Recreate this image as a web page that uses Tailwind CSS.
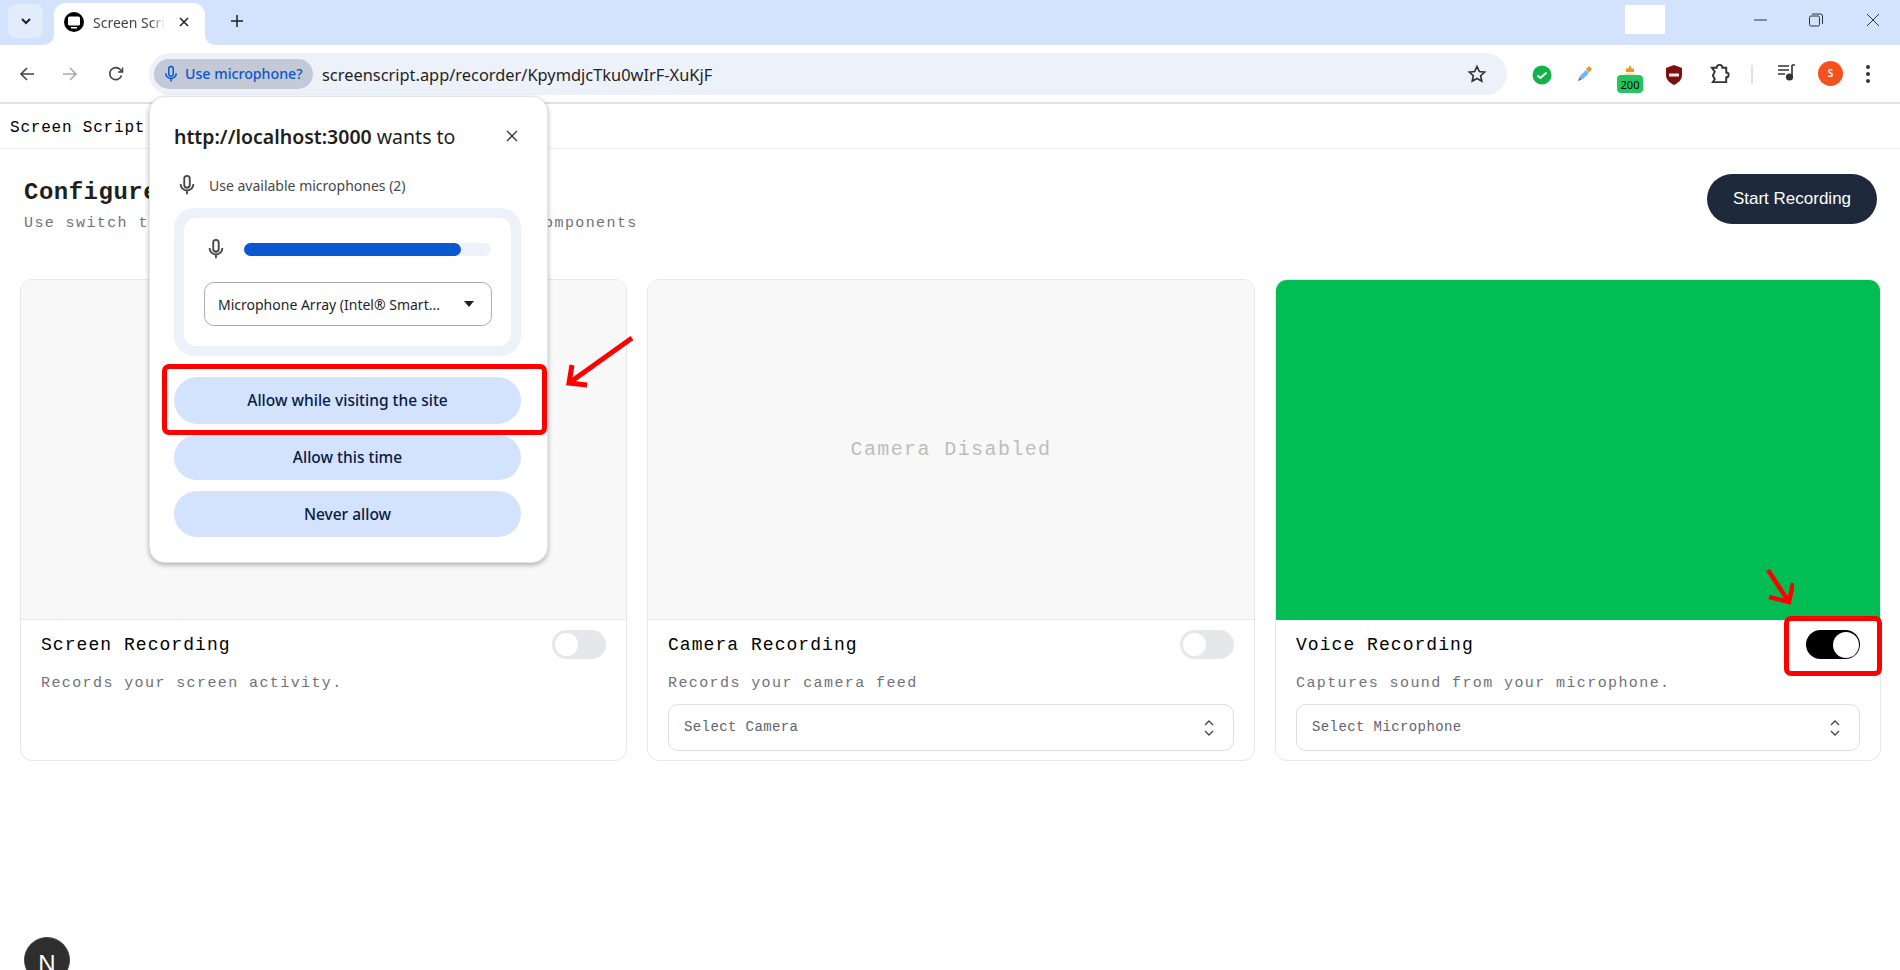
<!DOCTYPE html>
<html lang="en">
<head>
  <meta charset="UTF-8" />
  <title>Screen Script</title>
  <script src="https://cdn.jsdelivr.net/npm/@tailwindcss/browser@4"></script>
</head>
<body class="relative h-[970px] w-[1900px] overflow-hidden bg-white font-['Noto_Sans',sans-serif]">

  <!-- Tab strip -->
  <div class="relative flex h-[45px] items-start bg-[#d3e3fd]">
    <div class="ml-2 mt-1 flex h-[34px] w-[35px] items-center justify-center rounded-lg bg-[#e3ecfc]">
      <svg class="h-4 w-4" viewBox="0 0 16 16" fill="none" stroke="#1f1f1f" stroke-width="2"><path d="M4 6l4 4 4-4" /></svg>
    </div>
    <div class="relative ml-[11px] mt-[3px] flex h-[42px] w-[151px] items-center rounded-t-xl bg-white pb-1 pl-[10px]">
      <svg class="h-5 w-5" viewBox="0 0 20 20"><circle cx="10" cy="10" r="10" fill="#000" /><rect x="4" y="4.5" width="12" height="9" rx="1.5" fill="#fff" /><rect x="7" y="15" width="6" height="1.5" fill="#fff" /></svg>
      <span class="ml-[9px] w-[72px] overflow-hidden whitespace-nowrap text-[14px] text-[#444] [mask-image:linear-gradient(90deg,#000_80%,transparent)]">Screen Script</span>
      <svg class="ml-[13px] h-3 w-3" viewBox="0 0 12 12" stroke="#1f1f1f" stroke-width="1.5"><path d="M2 2l8 8M10 2l-8 8" /></svg>
      <svg class="absolute bottom-0 right-[-10px] h-[10px] w-[10px]" viewBox="0 0 10 10"><path d="M0 0a10 10 0 0 0 10 10H0z" fill="#fff" /></svg>
      <svg class="absolute bottom-0 left-[-10px] h-[10px] w-[10px]" viewBox="0 0 10 10"><path d="M10 0a10 10 0 0 1-10 10h10z" fill="#fff" /></svg>
    </div>
    <svg class="ml-[25px] mt-[14px] h-[14px] w-[14px]" viewBox="0 0 14 14" stroke="#1f1f1f" stroke-width="1.5"><path d="M7 1v12M1 7h12" /></svg>
    <div class="absolute left-[1625px] top-[5px] h-[29px] w-[40px] bg-white"></div>
    <svg class="absolute left-[1754px] top-[14px] h-3 w-[14px]" viewBox="0 0 14 12" stroke="#333" stroke-width="1"><path d="M0 6h13" /></svg>
    <svg class="absolute left-[1809px] top-[13px] h-[14px] w-[14px]" viewBox="0 0 14 14" fill="none" stroke="#333" stroke-width="1"><rect x="0.5" y="3" width="10" height="10" rx="1.5" /><path d="M3 1h8.5a2 2 0 0 1 2 2v8" /></svg>
    <svg class="absolute left-[1866px] top-[13px] h-[14px] w-[14px]" viewBox="0 0 14 14" stroke="#333" stroke-width="1"><path d="M1 1l12 12M13 1L1 13" /></svg>
  </div>

  <!-- Toolbar -->
  <div class="flex h-[59px] items-center rounded-t-[10px] border-b-2 border-[#e2e2e2] bg-white pt-[1px]">
    <svg class="ml-[19px] h-4 w-4" viewBox="0 0 16 16" fill="none" stroke="#444" stroke-width="1.6"><path d="M15 8H2M8 2L2 8l6 6" /></svg>
    <svg class="ml-[27px] h-4 w-4" viewBox="0 0 16 16" fill="none" stroke="#aaa" stroke-width="1.6"><path d="M1 8h13M8 2l6 6-6 6" /></svg>
    <svg class="ml-[30px] h-4 w-4" viewBox="0 0 16 16" fill="none" stroke="#444" stroke-width="1.6"><path d="M13.5 9.5A6 6 0 1 1 12.4 3.8L14.5 6M14.5 1.5V6H10" /></svg>
    <div class="ml-[25px] flex h-[42px] w-[1358px] items-center rounded-full bg-[#edf2fa] pl-[5px] pr-[20px]">
      <div class="flex h-[30px] w-[159px] items-center rounded-full bg-[#c3c9d6] pl-[8px]">
        <svg class="h-[18px] w-[18px]" viewBox="0 0 24 24" fill="none" stroke="#0b57d0" stroke-width="2"><rect x="9" y="2" width="6" height="13" rx="3" /><path d="M5 11a7 7 0 0 0 14 0M12 18v4" /></svg>
        <span class="ml-[5px] whitespace-nowrap text-[14.2px] font-medium text-[#0b57d0]">Use microphone?</span>
      </div>
      <span class="ml-[9px] whitespace-nowrap pt-[2px] text-[16.4px] text-[#1f1f1f]">screenscript.app/recorder/KpymdjcTku0wIrF-XuKjF</span>
      <svg class="ml-auto h-5 w-5" viewBox="0 0 24 24" fill="none" stroke="#333" stroke-width="2"><path d="M12 3l2.8 6 6.4.7-4.8 4.4 1.3 6.4L12 17.3l-5.7 3.2 1.3-6.4L2.8 9.7 9.2 9z" /></svg>
    </div>
    <div class="relative h-full flex-1">
      <svg class="absolute left-[25px] top-[19px] h-5 w-5" viewBox="0 0 20 20"><circle cx="10" cy="10" r="9.5" fill="#12b24b" /><path d="M5.5 10.5l3 2.5 6-5.5" fill="none" stroke="#fff" stroke-width="2" /></svg>
      <svg class="absolute left-[69px] top-[19px] h-[18px] w-[18px]" viewBox="0 0 18 18"><path d="M2 16l2-5 6-6 3 3-6 6z" fill="#6ab7f5" /><path d="M2 16l1.500-3.500 2 2z" fill="#f0344f" /><path d="M10 4l3-3 3 3-3 3.500z" fill="#f29419" /></svg>
      <svg class="absolute left-[116px] top-[17px] h-[12px] w-[14px]" viewBox="0 0 14 12"><path d="M0 12C2 9 12 9 14 12z" fill="#fbe3c0" /><path d="M3 9V5l2 1 2-4 2 4 2-1v4z" fill="#f29419" /></svg>
      <div class="absolute left-[110px] top-[29px] flex h-[18px] w-[26px] items-center justify-center rounded-[4px] bg-[#22c55e] text-[11px] leading-none text-black">200</div>
      <svg class="absolute left-[158px] top-[19px] h-5 w-[18px]" viewBox="0 0 18 20"><path d="M9 0l8 3v7c0 5-4 8-8 10-4-2-8-5-8-10V3z" fill="#7c0f0f" /><rect x="4" y="8.500" width="10" height="3" fill="#f5eaea" /></svg>
      <svg class="absolute left-[203px] top-[17px] h-[21px] w-[21px]" viewBox="0 0 22 22" fill="none" stroke="#333" stroke-width="2"><path d="M2 5h5a3 3 0 0 1 6 0h4v5a2.500 2.500 0 0 1 0 5v5H3l2-3-2-4 2-4z" /></svg>
      <div class="absolute left-[244px] top-[19px] h-[19px] w-[2px] bg-[#d3e3fd]"></div>
      <svg class="absolute left-[270px] top-[17px] h-[20px] w-[20px]" viewBox="0 0 20 20" fill="none" stroke="#333" stroke-width="1.600"><path d="M1 3h11M1 7h11M1 11h7M15 2h3M15 2v11" /><circle cx="12.500" cy="14" r="2.800" fill="#333" /></svg>
      <div class="absolute left-[311px] top-[15px] flex h-[25px] w-[25px] items-center justify-center rounded-full bg-[#f4511e] text-[10px] font-semibold text-white">S</div>
      <svg class="absolute left-[359px] top-[19px] h-[18px] w-[4px]" viewBox="0 0 4 18" fill="#333"><circle cx="2" cy="2" r="2" /><circle cx="2" cy="9" r="2" /><circle cx="2" cy="16" r="2" /></svg>
    </div>
  </div>

  <!-- App -->
  <header class="flex h-[45px] items-center border-b border-[#eeeeee] pl-[10px] pt-[3px] font-['Liberation_Mono',monospace] text-[16px] font-medium tracking-[0.8px] text-black">Screen Script</header>

  <main class="font-['Liberation_Mono',monospace]">
    <div class="flex h-[130px] items-start justify-between px-6 pt-[25px]">
      <div class="mt-[3px]">
        <h1 class="text-[24px] font-bold leading-8 tracking-[0.5px] text-[#1f1f1f]">Configure Recording</h1>
        <p class="mt-[3px] whitespace-nowrap text-[15px] leading-6 tracking-[1.4px] text-[#71717a]">Use switch to enable or disable any of the media components</p>
      </div>
      <button class="mr-[-1px] h-[50px] w-[170px] rounded-full bg-[#1e293b] font-['Liberation_Sans',sans-serif] text-[17px] font-medium text-white">Start Recording</button>
    </div>

    <div class="grid grid-cols-[607px_608px_606px] gap-5 px-5">
      <section class="flex h-[482px] flex-col overflow-hidden rounded-xl border border-[#e5e7eb]">
        <div class="h-[340px] border-b border-[#e5e7eb] bg-[#f8f8f8]"></div>
        <div class="px-5 pt-[10px]">
          <div class="flex h-[30px] items-center justify-between">
            <h2 class="text-[18px] font-medium tracking-[1.05px] text-black">Screen Recording</h2>
            <div class="mt-[-1px] flex h-[29px] w-[54px] items-center rounded-full bg-[#e5e7eb] p-[3px]"><div class="h-[23px] w-[23px] rounded-full bg-white"></div></div>
          </div>
          <p class="mt-[12px] text-[15px] leading-6 tracking-[1.4px] text-[#71717a]">Records your screen activity.</p>
        </div>
      </section>

      <section class="flex h-[482px] flex-col overflow-hidden rounded-xl border border-[#e5e7eb]">
        <div class="flex h-[340px] items-center justify-center border-b border-[#e5e7eb] bg-[#f8f8f8] text-[20px] tracking-[1.4px] text-[#bdbdbd]">Camera Disabled</div>
        <div class="px-5 pt-[10px]">
          <div class="flex h-[30px] items-center justify-between">
            <h2 class="text-[18px] font-medium tracking-[1.05px] text-black">Camera Recording</h2>
            <div class="mt-[-1px] flex h-[29px] w-[54px] items-center rounded-full bg-[#e5e7eb] p-[3px]"><div class="h-[23px] w-[23px] rounded-full bg-white"></div></div>
          </div>
          <p class="mt-[12px] text-[15px] leading-6 tracking-[1.4px] text-[#71717a]">Records your camera feed</p>
          <div class="mt-[8px] flex h-[47px] items-center justify-between rounded-[10px] border border-[#dcdde6] pl-[15px] pr-[18px] text-[14px] tracking-[0.4px] text-[#5f6470]">
            Select Camera
            <svg class="h-5 w-3" viewBox="0 0 12 20" fill="none" stroke="#444" stroke-width="1.300"><path d="M2 7l4-4 4 4M2 13l4 4 4-4" /></svg>
          </div>
        </div>
      </section>

      <section class="flex h-[482px] flex-col overflow-hidden rounded-xl border border-[#e5e7eb]">
        <div class="h-[340px] bg-[#02bd53]"></div>
        <div class="px-5 pt-[10px]">
          <div class="flex h-[30px] items-center justify-between">
            <h2 class="text-[18px] font-medium tracking-[1.05px] text-black">Voice Recording</h2>
            <div class="mt-[-1px] flex h-[29px] w-[54px] items-center justify-end rounded-full bg-black p-[1.5px]"><div class="h-[26px] w-[26px] rounded-full bg-white"></div></div>
          </div>
          <p class="mt-[12px] text-[15px] leading-6 tracking-[1.4px] text-[#71717a]">Captures sound from your microphone.</p>
          <div class="mt-[8px] flex h-[47px] items-center justify-between rounded-[10px] border border-[#dcdde6] pl-[15px] pr-[18px] text-[14px] tracking-[0.4px] text-[#5f6470]">
            Select Microphone
            <svg class="h-5 w-3" viewBox="0 0 12 20" fill="none" stroke="#444" stroke-width="1.300"><path d="M2 7l4-4 4 4M2 13l4 4 4-4" /></svg>
          </div>
        </div>
      </section>
    </div>
  </main>

  <!-- Next.js dev badge -->
  <div class="absolute bottom-[-13px] left-6 flex h-[46px] w-[46px] items-center justify-center rounded-full border border-[#444] bg-[#2e2e2e] pt-[8px] font-['Liberation_Sans',sans-serif] text-[24px] text-white">N</div>

  <!-- Permission bubble -->
  <div class="absolute left-[149px] top-[96px] h-[467px] w-[399px] rounded-2xl border border-[#e5e5e5] bg-white px-6 shadow-[0_2px_5px_rgba(0,0,0,0.3)]">
    <div class="flex h-[54px] items-end justify-between pr-[5px]">
      <p class="whitespace-nowrap text-[19.5px] text-[#1f1f1f]"><b class="font-semibold">http://localhost:3000</b> wants to</p>
      <svg class="mb-[9px] h-3 w-3" viewBox="0 0 12 12" stroke="#333" stroke-width="1.300"><path d="M1 1l10 10M11 1L1 11" /></svg>
    </div>
    <div class="mt-[22px] flex h-[24px] items-center pl-[2px] text-[14px] text-[#474747]">
      <svg class="h-[22px] w-[22px]" viewBox="0 0 24 24" fill="none" stroke="#444" stroke-width="2"><rect x="9" y="2" width="6" height="13" rx="3" /><path d="M5 11a7 7 0 0 0 14 0M12 18v4" /></svg>
      <span class="ml-[11px]">Use available microphones (2)</span>
    </div>
    <div class="mt-[11px] h-[148px] w-[347px] rounded-[20px] bg-[#edf2fa] p-[10px]">
      <div class="h-[128px] rounded-[12px] bg-white px-[20px] pt-[20px]">
        <div class="flex items-center">
          <svg class="ml-px h-[22px] w-[22px]" viewBox="0 0 24 24" fill="none" stroke="#444" stroke-width="2"><rect x="9" y="2" width="6" height="13" rx="3" /><path d="M5 11a7 7 0 0 0 14 0M12 18v4" /></svg>
          <div class="ml-[17px] h-[13px] w-[248px] rounded-full bg-[#edf2fa]"><div class="h-full w-[217px] rounded-full bg-[#0b57d0]"></div></div>
        </div>
        <div class="mt-[22px] flex h-[44px] w-[288px] items-center justify-between rounded-[10px] border border-[#acacac] pl-[13px] pr-[17px] text-[14px] text-[#1f1f1f]">
          <span class="whitespace-nowrap">Microphone Array (Intel® Smart...</span>
          <svg class="h-[6px] w-[10px]" viewBox="0 0 10 6"><path d="M0 0h10L5 6z" fill="#1f1f1f" /></svg>
        </div>
      </div>
    </div>
    <div class="mt-[21px] flex w-[347px] flex-col">
      <button class="h-[47px] rounded-full bg-[#d3e3fd] text-[15.5px] font-medium text-[#0a1a45]">Allow while visiting the site</button>
      <button class="mt-[11px] h-[45px] rounded-full bg-[#d3e3fd] pt-px text-[15.5px] font-medium text-[#0a1a45]">Allow this time</button>
      <button class="mt-[11px] h-[46px] rounded-full bg-[#d3e3fd] pt-[2px] text-[15.5px] font-medium text-[#0a1a45]">Never allow</button>
    </div>
  </div>

  <!-- Red annotations over the capture -->
  <div class="absolute left-[162px] top-[364px] h-[71px] w-[385px] rounded-[7px] border-[5px] border-[#ff0000]"></div>
  <svg class="absolute left-[560px] top-[332px] h-[62px] w-[80px]" viewBox="0 0 80 62" fill="none" stroke="#ff0000" stroke-width="5"><path d="M72 6L9 51M12 33L9 51l18 2" /></svg>
  <div class="absolute left-[1784px] top-[616px] h-[60px] w-[98px] rounded-[7px] border-[5px] border-[#ff0000]"></div>
  <svg class="absolute left-[1762px] top-[566px] h-[40px] w-[32px]" viewBox="0 0 32 40" fill="none" stroke="#ff0000" stroke-width="4.500"><path d="M6 4l21 32M31 17l-4 19-20-5" /></svg>
</body>
</html>
